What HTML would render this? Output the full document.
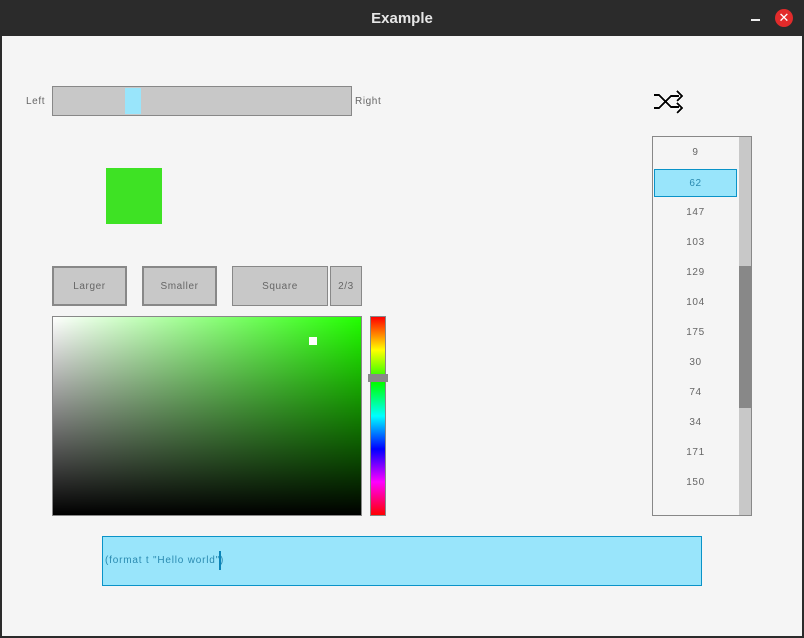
<!DOCTYPE html>
<html><head><style>
*{margin:0;padding:0;box-sizing:border-box}
body{width:804px;height:638px;background:#2b2b2b;font-family:"Liberation Sans",sans-serif;position:relative;overflow:hidden}
.title{position:absolute;left:0;top:2px;width:804px;height:36px;color:#e6e6e6;font-weight:bold;font-size:15px;text-align:center;line-height:34px}
.body{position:absolute;left:2px;top:36px;width:800px;height:600px;background:#f5f5f5}
.a{position:absolute}
.t{position:absolute;font-size:10px;color:#666;letter-spacing:0.6px}
.btn{position:absolute;background:#c8c8c8;border:2px solid #888;color:#666;font-size:10px;text-align:center;letter-spacing:0.6px}
.li{position:absolute;left:654px;width:83px;text-align:center;font-size:10px;color:#666;height:28px;line-height:30px;letter-spacing:0.6px}
</style></head><body>
<div class="title">Example</div>
<div class="a" style="left:751px;top:19px;width:9px;height:2px;background:#eee"></div>
<div class="a" style="left:775px;top:9px;width:18px;height:18px;border-radius:50%;background:#e22b2b;color:#fff;font-size:13px;line-height:18px;text-align:center">✕</div>
<div class="body"></div>
<div class="t" style="left:26px;top:96px">Left</div>
<div class="a" style="left:52px;top:86px;width:300px;height:30px;background:#c8c8c8;border:1px solid #888"></div>
<div class="a" style="left:125px;top:88px;width:16px;height:26px;background:#99e5fb"></div>
<div class="t" style="left:355px;top:96px">Right</div>
<div class="a" style="left:106px;top:168px;width:56px;height:56px;background:#3ee224"></div>
<div class="btn" style="left:52px;top:266px;width:75px;height:40px;line-height:38px">Larger</div>
<div class="btn" style="left:142px;top:266px;width:75px;height:40px;line-height:38px">Smaller</div>
<div class="btn" style="left:232px;top:266px;width:96px;height:40px;line-height:40px;border-width:1px">Square</div>
<div class="btn" style="left:330px;top:266px;width:32px;height:40px;line-height:40px;border-width:1px">2/3</div>
<div class="a" style="left:52px;top:316px;width:310px;height:200px;border:1px solid #888;background:linear-gradient(to bottom,rgba(0,0,0,0),#000),linear-gradient(to right,#fff,#22ff00)"></div>
<div class="a" style="left:309px;top:337px;width:8px;height:8px;background:#fff"></div>
<div class="a" style="left:370px;top:316px;width:16px;height:200px;border:1px solid #888;background:linear-gradient(#f00,#ff0 16.7%,#0f0 33.3%,#0ff 50%,#00f 66.7%,#f0f 83.3%,#f00)"></div>
<div class="a" style="left:368px;top:374px;width:20px;height:8px;background:#888"></div>
<svg class="a" style="left:650px;top:88px" width="36" height="28" shape-rendering="crispEdges"><g fill="none" stroke="#000" stroke-width="2"><path d="M4 7h5l12 12h8M4 20h5l12-12h8M27 3l5 5-5 5M27 15l5 5-5 5"/></g></svg>
<div class="a" style="left:652px;top:136px;width:100px;height:380px;border:1px solid #888;background:#f5f5f5"></div>
<div class="a" style="left:739px;top:137px;width:12px;height:378px;background:#c8c8c8"></div>
<div class="a" style="left:739px;top:266px;width:12px;height:142px;background:#888"></div>
<div class="li" style="top:138px">9</div>
<div class="li" style="top:169px;background:#99e5fb;border:1px solid #0a93c8;color:#2a8ab0;line-height:28px">62</div>
<div class="li" style="top:198px">147</div>
<div class="li" style="top:228px">103</div>
<div class="li" style="top:258px">129</div>
<div class="li" style="top:288px">104</div>
<div class="li" style="top:318px">175</div>
<div class="li" style="top:348px">30</div>
<div class="li" style="top:378px">74</div>
<div class="li" style="top:408px">34</div>
<div class="li" style="top:438px">171</div>
<div class="li" style="top:468px">150</div>
<div class="a" style="left:102px;top:536px;width:600px;height:50px;background:#99e5fb;border:1px solid #0a93c8"></div>
<div class="t" style="left:105px;top:555px;color:#2a8ab0;letter-spacing:0.8px">(format t "Hello world")</div>
<div class="a" style="left:219px;top:551px;width:2px;height:19px;background:#0a84b8"></div>
</body></html>
